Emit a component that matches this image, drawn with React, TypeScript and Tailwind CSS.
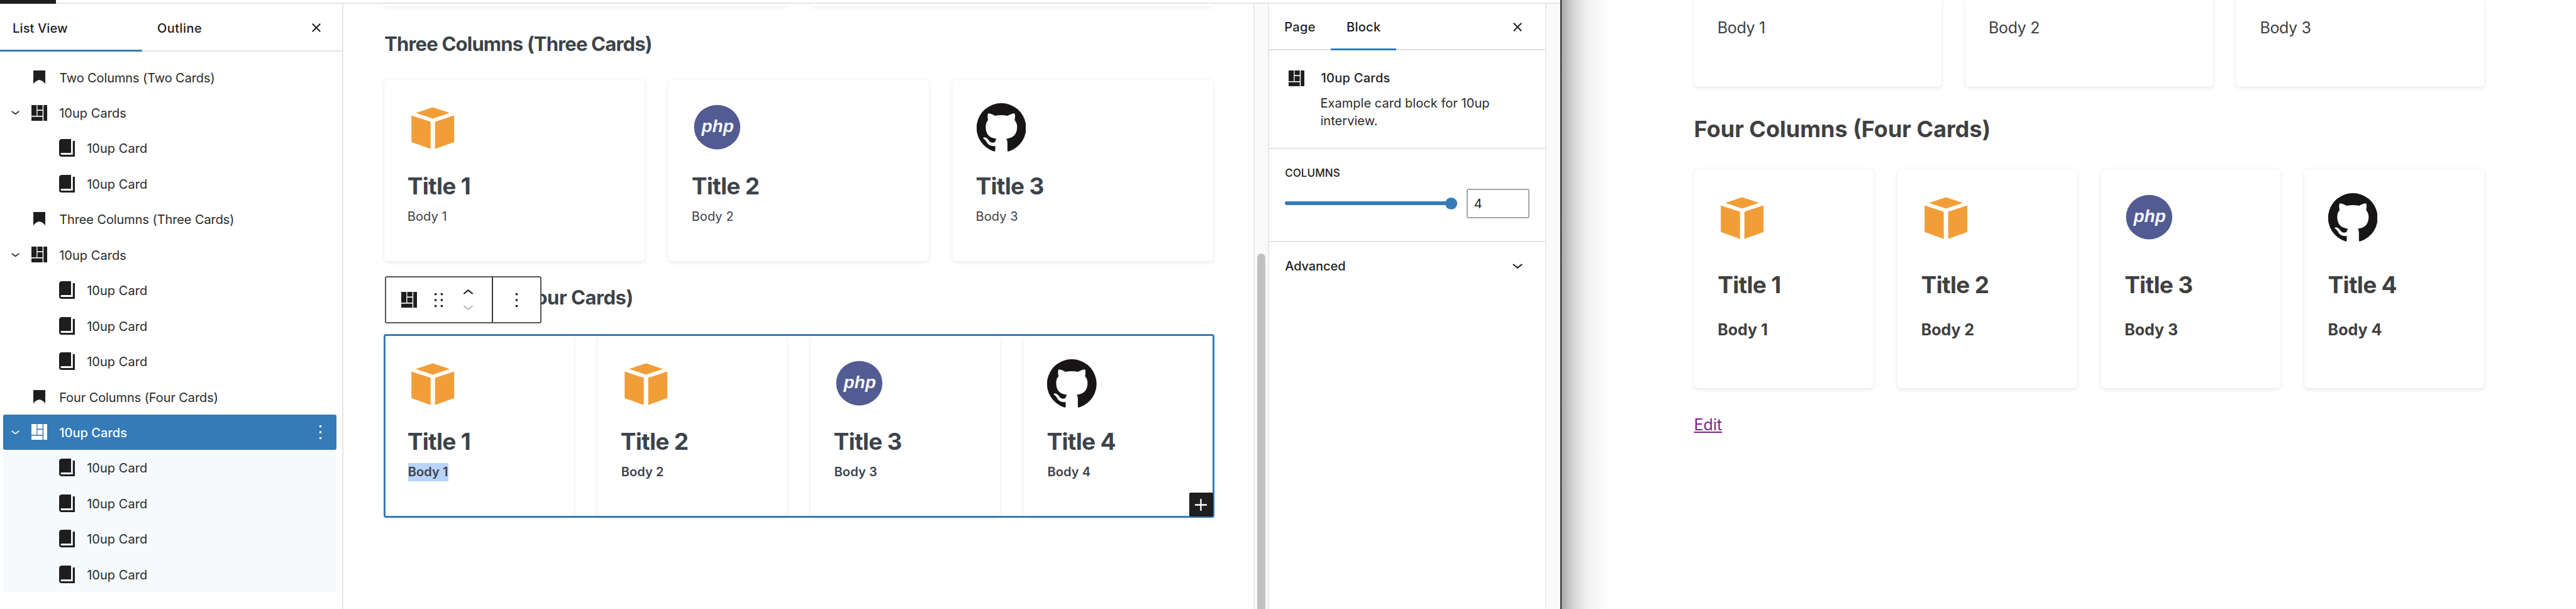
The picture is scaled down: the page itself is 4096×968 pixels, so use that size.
import React from "react";

type Logo = "aws" | "php" | "github";

function GridIcon({ className = "" }: { className?: string }) {
  return (
    <svg viewBox="0 0 25 25" className={`h-[25px] w-[25px] shrink-0 ${className}`} fill="currentColor">
      <rect x="0" y="0" width="8.2" height="17" />
      <rect x="9.5" y="0" width="8.2" height="7.4" />
      <rect x="9.5" y="9" width="8.2" height="8" />
      <rect x="0" y="18.6" width="17.7" height="6.4" />
      <rect x="19.2" y="0" width="5.8" height="25" />
    </svg>
  );
}

function BookIcon() {
  return (
    <svg viewBox="0 0 25 28" className="h-[28px] w-[25px] shrink-0" fill="currentColor">
      <path d="M4.5 0H19V22H4.5C3 22 2.4 22.6 2.4 23.5S3.1 25 4.5 25H21.8V3H25V28H4.5C1.5 28 0 26.5 0 24V4.5C0 1.5 1.5 0 4.5 0Z" />
    </svg>
  );
}

function BookmarkIcon() {
  return (
    <svg viewBox="0 0 19 22" className="h-[22px] w-[19px] shrink-0" fill="currentColor">
      <path d="M0 0H19V21.8C17.5 18.6 14 15.8 9.5 15 5 15.8 1.5 18.6 0 21.8Z" />
    </svg>
  );
}

function CloseIcon() {
  return (
    <svg viewBox="0 0 14 14" className="h-[14px] w-[14px]" stroke="#1e1e1e" strokeWidth="2" fill="none">
      <path d="M.8.8 13.2 13.2M13.2.8.8 13.2" />
    </svg>
  );
}

function Chevron({ className, stroke = "currentColor" }: { className: string; stroke?: string }) {
  return (
    <svg viewBox="0 0 16 8" className={className} stroke={stroke} strokeWidth="2.1" fill="none">
      <path d="M.8 1 8 6.6 15.2 1" />
    </svg>
  );
}

function Dots({ columns = 1 }: { columns?: 1 | 2 }) {
  return (
    <svg viewBox="0 0 13 22" className="h-[22px] w-[13px]" fill="currentColor">
      {(columns === 2 ? [0, 9.8] : [4.9]).map((x) =>
        [0, 9.4, 18.8].map((y) => <rect key={`${x}-${y}`} x={x} y={y} width="3.2" height="3.2" />)
      )}
    </svg>
  );
}

function CardLogo({ logo }: { logo: Logo }) {
  if (logo === "aws") {
    return (
      <svg viewBox="0 0 78.4 78.4" className="h-[78.4px] w-[78.4px]" fill="#f19e39">
        <path d="M39.2 6.6 66.2 15.4 39.2 24.4 12.2 15.4Z" />
        <path d="M5.2 19.5 35.7 29.6V72.8L5.2 61.7Z" />
        <path d="M73.2 19.5 42.7 29.6V72.8L73.2 61.7Z" />
      </svg>
    );
  }
  if (logo === "php") {
    return (
      <svg viewBox="0 0 78.4 78.4" className="h-[78.4px] w-[78.4px]">
        <ellipse cx="39.3" cy="38.1" rx="36.8" ry="35.4" fill="#525b92" />
        <text
          x="14.4"
          y="45.8"
          fill="#f4f5fa"
          fontFamily="Liberation Sans, sans-serif"
          fontSize="27"
          fontStyle="italic"
          fontWeight="700"
          textLength="51.5"
          lengthAdjust="spacingAndGlyphs"
        >
          php
        </text>
      </svg>
    );
  }
  return (
    <svg viewBox="0 0 300 300" className="h-[78.4px] w-[78.4px]" fill="#171516">
      <path d="M150 0A150 150 0 0 0 104 293Q113 295 113 288V260C90 264 72 256 64 242 58 231 53 222 42 216 38 213 40 209 47 208 62 209 70 222 77 231 86 243 101 241 112 236 113 227 117 221 121 217 85 213 55 197 55 143 55 127 60 113 70 102 67 95 64 80 69 62 82 62 97 67 112 77 137 71 163 71 188 77 203 67 218 62 231 62 236 80 233 95 230 102 240 113 246 127 246 143 246 197 215 213 180 217 185 222 187 231 187 245V288Q187 295 196 293A150 150 0 0 0 150 0Z" />
    </svg>
  );
}

function ListRow({
  icon,
  label,
  nested = false,
  expanded = false,
  selected = false,
  tinted = false,
}: {
  icon: "bookmark" | "grid" | "book";
  label: string;
  nested?: boolean;
  expanded?: boolean;
  selected?: boolean;
  tinted?: boolean;
}) {
  const tone = selected
    ? "bg-[#357bb7] text-white rounded-[3px]"
    : tinted
      ? "bg-[#f6fafd] text-[#1e1e1e]"
      : "text-[#1e1e1e]";
  return (
    <div className={`flex h-[56.45px] items-center pl-[1.1px] ${tone}`}>
      <div className={`flex shrink-0 items-center justify-center ${nested ? "w-[81.6px]" : "w-[37.6px]"}`}>
        {expanded && <Chevron className="h-[6.5px] w-[13px]" />}
      </div>
      <div className="flex w-[37.6px] shrink-0 justify-center">
        {icon === "bookmark" && <BookmarkIcon />}
        {icon === "grid" && <GridIcon />}
        {icon === "book" && <BookIcon />}
      </div>
      <span
        className={`mt-[2px] ml-[12.9px] grow text-[20px] leading-[28px] ${
          selected ? "font-medium" : "text-[#2a2a2a]"
        } ${icon === "bookmark" ? "tracking-[-0.1px]" : "tracking-[0.04px]"}`}
      >
        {label}
      </span>
      {selected && (
        <span className="mr-[19px]">
          <Dots />
        </span>
      )}
    </div>
  );
}

function Sidebar() {
  return (
    <aside className="flex w-[546px] shrink-0 flex-col border-r-2 border-[#e6e6e6]">
      <div className="flex h-[76px] shrink-0 items-stretch border-b-2 border-[#e4e4e4] text-[20px] leading-[28px] font-medium tracking-[0.15px] text-[#1e1e1e]">
        <div className="-mb-[2px] w-[226px] border-b-[3px] border-[#357bb7] pt-[24.8px] pl-[20px]">List View</div>
        <div className="grow pt-[24.8px] pl-[24px] tracking-[0.45px]">Outline</div>
        <div className="mr-[34px] pt-[31px]">
          <CloseIcon />
        </div>
      </div>
      <div className="w-[535px] pt-[12.4px] pl-[5px]">
        <ListRow icon="bookmark" label="Two Columns (Two Cards)" />
        <ListRow icon="grid" label="10up Cards" expanded />
        <ListRow icon="book" label="10up Card" nested />
        <ListRow icon="book" label="10up Card" nested />
        <ListRow icon="bookmark" label="Three Columns (Three Cards)" />
        <ListRow icon="grid" label="10up Cards" expanded />
        <ListRow icon="book" label="10up Card" nested />
        <ListRow icon="book" label="10up Card" nested />
        <ListRow icon="book" label="10up Card" nested />
        <ListRow icon="bookmark" label="Four Columns (Four Cards)" />
        <ListRow icon="grid" label="10up Cards" expanded selected />
        <ListRow icon="book" label="10up Card" nested tinted />
        <ListRow icon="book" label="10up Card" nested tinted />
        <ListRow icon="book" label="10up Card" nested tinted />
        <ListRow icon="book" label="10up Card" nested tinted />
      </div>
    </aside>
  );
}

const cardShell = "rounded-[6.3px] bg-white shadow-[0_1.6px_6px_rgba(0,0,0,0.1)]";

function EditorCard({ logo, index, bold = false, marked = false }: { logo: Logo; index: number; bold?: boolean; marked?: boolean }) {
  return (
    <div className={`h-[288.4px] pt-[37.6px] pl-[37.6px] text-[#3c434a] ${cardShell}`}>
      <CardLogo logo={logo} />
      <h3 className="mt-[29.5px] -ml-px text-[37px] leading-[48px] font-bold tracking-[-0.7px]">Title {index}</h3>
      <p
        className={`mt-[9.9px] w-fit text-[20px] leading-[28.4px] tracking-[0.1px] ${
          bold ? "font-semibold" : "-ml-px"
        } ${marked ? "bg-[#b8d4fb]" : ""}`}
      >
        Body {index}
      </p>
    </div>
  );
}

function BlockToolbar() {
  return (
    <div className="absolute top-[-13.5px] left-[0.5px] z-10 flex h-[75px] w-[249px] rounded-[3px] border-2 border-[#555555] bg-white text-[#1e1e1e]">
      <div className="flex w-[170px] items-center border-r-2 border-[#3a3a3a] pl-[24.5px]">
        <GridIcon />
        <span className="ml-[27.5px]">
          <Dots columns={2} />
        </span>
        <span className="ml-[32px] flex flex-col gap-[17px]">
          <Chevron className="h-[8px] w-[17px] rotate-180" />
          <Chevron className="h-[8px] w-[17px]" stroke="#bbbbbb" />
        </span>
      </div>
      <div className="flex grow items-center justify-center">
        <Dots />
      </div>
    </div>
  );
}

function Canvas() {
  const heading = "text-[31px] leading-[40px] font-bold text-[#3c434a] whitespace-nowrap";
  return (
    <main className="w-[1446.8px] shrink-0 overflow-hidden pr-[63.6px] pl-[65.2px]">
      <div className="grid grid-cols-2 gap-[37.6px]">
        <div className="h-[4.4px] rounded-b-[6.3px] bg-white shadow-[0_1.6px_6px_rgba(0,0,0,0.1)]" />
        <div className="h-[4.4px] rounded-b-[6.3px] bg-white shadow-[0_1.6px_6px_rgba(0,0,0,0.1)]" />
      </div>
      <h2 className={`mt-[39.2px] tracking-[-0.81px] ${heading}`}>Three Columns (Three Cards)</h2>
      <div className="mt-[37.2px] grid grid-cols-3 gap-[37.6px]">
        <EditorCard logo="aws" index={1} />
        <EditorCard logo="php" index={2} />
        <EditorCard logo="github" index={3} />
      </div>
      <div className="relative mt-[37.7px]">
        <h2 className={`pt-[0.6px] tracking-[-0.45px] ${heading}`}>Four Columns (Four Cards)</h2>
        <BlockToolbar />
      </div>
      <div className="relative mt-[39.5px] grid grid-cols-4 gap-[37.6px]">
        <EditorCard logo="aws" index={1} bold marked />
        <EditorCard logo="aws" index={2} bold />
        <EditorCard logo="php" index={3} bold />
        <EditorCard logo="github" index={4} bold />
        <div className="absolute -inset-[1.5px] rounded-[4px] border-[3px] border-[#357bb7]" />
        <div className="absolute right-[0.5px] bottom-0 flex h-[38px] w-[38px] items-center justify-center rounded-[2px] bg-[#1e1e1e]">
          <svg viewBox="0 0 19 19" className="h-[19px] w-[19px]" stroke="#ffffff" strokeWidth="2.3">
            <path d="M9.5 0V19M0 9.5H19" />
          </svg>
        </div>
      </div>
    </main>
  );
}

function Settings() {
  return (
    <aside className="flex w-[439px] shrink-0 flex-col text-[20px] leading-[28.2px] text-[#1e1e1e]">
      <div className="flex h-[74px] shrink-0 items-stretch border-b-2 border-[#e2e2e2] font-medium tracking-[0.28px]">
        <div className="w-[98.7px] pt-[22.8px] pl-[24.5px]">Page</div>
        <div className="-mb-[2px] w-[103.6px] border-b-[3px] border-[#357bb7] pt-[22.8px] pl-[24.5px]">Block</div>
        <div className="mr-[36.6px] ml-auto pt-[29.6px]">
          <CloseIcon />
        </div>
      </div>
      <div className="flex h-[157px] shrink-0 border-b-2 border-[#e6e6e6] pt-[30.4px] pl-[31.6px]">
        <GridIcon className="mt-[1.2px]" />
        <div className="ml-[26px]">
          <div className="font-medium tracking-[0.28px]">10up Cards</div>
          <p className="mt-[11.4px] -ml-px w-[300px] text-[#2a2a2a] tracking-[0.05px]">
            Example card block for 10up interview.
          </p>
        </div>
      </div>
      <div className="h-[147.5px] shrink-0 border-b-2 border-[#e6e6e6] pt-[26.2px] pl-[25.4px]">
        <div className="text-[17px] leading-[24px] font-medium tracking-[0.07px]">COLUMNS</div>
        <div className="mt-[12.6px] flex items-center">
          <div className="flex h-[6px] w-[274px] items-center justify-end rounded-full bg-[#357bb7]">
            <div className="h-[19px] w-[19px] rounded-full bg-[#357bb7]" />
          </div>
          <div className="ml-[14.6px] flex h-[47px] w-[100px] items-center rounded-[3px] border-2 border-[#a6a6a6] pt-[2px] pl-[10px]">
            4
          </div>
        </div>
      </div>
      <div className="flex items-center justify-between pt-[24.5px] pr-[36px] pl-[25.4px] font-medium tracking-[-0.08px]">
        Advanced
        <Chevron className="h-[8px] w-[16px]" />
      </div>
    </aside>
  );
}

function EditorWindow() {
  return (
    <div className="flex w-[2480.5px] shrink-0 flex-col bg-white">
      <div className="flex h-[6px] shrink-0">
        <div className="w-[89px] bg-[#1e1e1e]" />
        <div className="grow border-b-2 border-[#e6e6e6]" />
      </div>
      <div className="flex h-[962px] shrink-0">
        <Sidebar />
        <Canvas />
        <div className="flex w-[25px] shrink-0 justify-center border-x-2 border-[#e8e8e8] bg-[#fafafa]">
          <div className="mt-[397px] h-[580px] w-[13px] rounded-full bg-[#c1c1c1]" />
        </div>
        <Settings />
        <div className="grow border-l-2 border-[#ebebeb] bg-[#fafafa]" />
      </div>
    </div>
  );
}

function SiteCard({ logo, index }: { logo: Logo; index: number }) {
  return (
    <div className={`h-[348.5px] pt-[37.6px] pl-[37.6px] ${cardShell}`}>
      <CardLogo logo={logo} />
      <h3 className="mt-[43.7px] text-[37px] leading-[48px] font-bold tracking-[-0.7px]">Title {index}</h3>
      <p className="mt-[29.5px] text-[25px] leading-[36px] font-bold">Body {index}</p>
    </div>
  );
}

function SitePage() {
  return (
    <div className="flex grow bg-white text-[#404040]">
      <div className="w-[80px] shrink-0 bg-[linear-gradient(to_right,#a6a6a6_0,#c2c2c2_10px,#d5d5d5_19px,#e3e3e3_28px,#ededed_38px,#f4f4f4_48px,#fafafa_62px,#ffffff_80px)]" />
      <div className="ml-[131.1px] w-[1256.3px]">
        <div className="grid grid-cols-3 gap-[37.6px]">
          {[1, 2, 3].map((n) => (
            <div
              key={n}
              className="h-[138px] rounded-b-[6.3px] bg-white pt-[26.2px] pl-[37.2px] text-[25px] leading-[36px] tracking-[-0.35px] shadow-[0_1.6px_6px_rgba(0,0,0,0.1)]"
            >
              Body {n}
            </div>
          ))}
        </div>
        <h2 className="mt-[43.2px] text-[36px] leading-[48px] font-bold">Four Columns (Four Cards)</h2>
        <div className="mt-[39.8px] grid grid-cols-4 gap-[37.6px]">
          <SiteCard logo="aws" index={1} />
          <SiteCard logo="aws" index={2} />
          <SiteCard logo="php" index={3} />
          <SiteCard logo="github" index={4} />
        </div>
        <a
          className="mt-[39.3px] block w-fit text-[25px] leading-[36px] text-[#7d1f87] underline decoration-2 underline-offset-[2px]"
          href="#edit"
        >
          Edit
        </a>
      </div>
    </div>
  );
}

export default function App() {
  return (
    <div className="flex h-[968px] w-[4096px] overflow-hidden bg-white font-[Inter,sans-serif]">
      <EditorWindow />
      <div className="w-[2px] shrink-0 bg-[#2b2b2b]" />
      <SitePage />
    </div>
  );
}
